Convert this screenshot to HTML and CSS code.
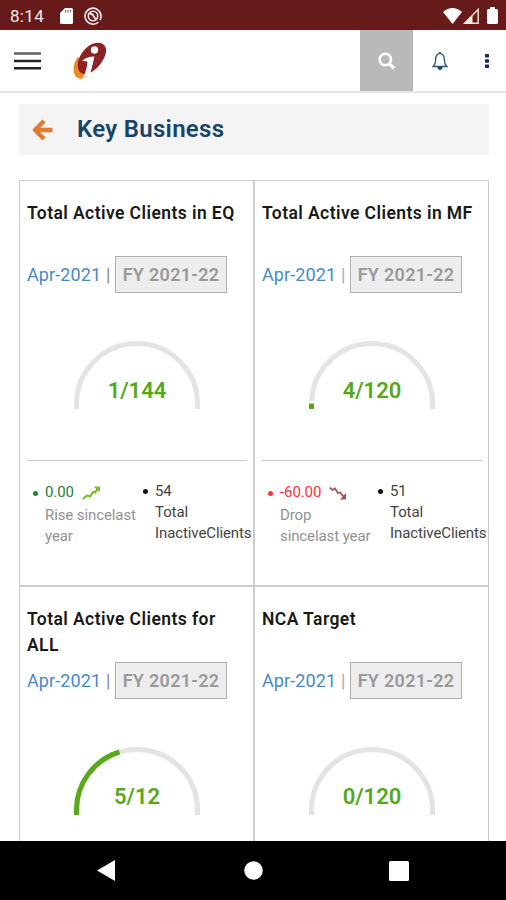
FILE: index.html
```html
<!DOCTYPE html>
<html lang="en">
<head>
    <meta charset="UTF-8">
    <meta name="viewport" content="width=device-width, initial-scale=1.0">
    <title>Key Business</title>
    <link rel="stylesheet" href="styles.css">
</head>
<body>
    <div class="status-bar">
        <span class="time">8:14</span>
        <svg class="sd-icon" width="13" height="16" viewBox="0 0 13 16"><path d="M5 0h6.500q1.500 0 1.500 1.500v13q0 1.500-1.500 1.500h-10Q0 16 0 14.500V5z" fill="#fff"/><path d="M5.500 2v2.500M8 2v2.500M10.500 2v2.500" stroke="#9a6565" stroke-width="1.200"/></svg>
        <svg class="sync-icon" width="18" height="18" viewBox="0 0 18 18" fill="none" stroke="#f5eaea"><path d="M14.500 15A8 8 0 1 1 17 9.500q0 2-1 3.500" stroke-width="1.600"/><circle cx="9" cy="9" r="4.700" stroke-width="1.600"/><path d="M5.500 6.500q3 0 4 2.500t3 3" stroke-width="1.900"/></svg>
        <div class="signals">
            <svg width="19" height="16" viewBox="0 0 19 16"><path d="M0 4Q9.500-4 19 4L9.500 16z" fill="#fff"/></svg>
            <svg width="16" height="16" viewBox="0 0 16 16"><path d="M1.500 15.200H15.200V1.500z" fill="none" stroke="#f5dfcf" stroke-width="1.500"/><path d="M1 16 9.500 7v9z" fill="#f8eee6"/></svg>
            <svg class="battery" width="11" height="17" viewBox="0 0 11 17"><path d="M3 0h5v2h1.500q1.500 0 1.500 1.500v12q0 1.500-1.500 1.500h-8Q0 17 0 15.500v-12Q0 2 1.500 2H3z" fill="#fff"/></svg>
        </div>
    </div>

    <header class="header">
        <svg class="menu" width="27" height="18" viewBox="0 0 27 18"><path d="M0 1.500h27" stroke="#666" stroke-width="2.600"/><path d="M0 9h27M0 16.300h27" stroke="#222" stroke-width="2.400"/></svg>
        <svg class="logo" width="34" height="38" viewBox="0 0 34 38">
            <path d="M5 15C-1 22-1 35 6 36.500c5 1 9-3 12-7z" fill="#ee8a1d"/>
            <path d="M9 11C14 3 23-1 29 1.500c7 3 4 14-2 21C21 30 13 34 8 31 3 27 4 18 9 11z" fill="#8d2224"/>
            <circle cx="21.500" cy="8" r="3.700" fill="#fff"/>
            <path d="M9 19Q13 14.500 21.500 14.500L18.500 27q-1 4-2.500 6l-6.500 3q4-6 5-16-2.500-1.500-5.500-1z" fill="#fff"/>
        </svg>
        <div class="actions">
            <div class="search"><svg width="18" height="18" viewBox="0 0 18 18" fill="none" stroke="#fff"><circle cx="7.300" cy="7.500" r="5.700" stroke-width="2.500"/><path d="M11.500 12l4.700 4.500" stroke-width="3.200"/></svg></div>
            <svg class="bell" width="16" height="18" viewBox="0 0 16 18"><path d="M8 1.700C4.500 1.700 3.700 4.500 3.700 7.500c0 4-1 5.500-2.500 7h13.600c-1.500-1.500-2.500-3-2.500-7 0-3-.8-5.800-4.300-5.800z" fill="none" stroke="#275777" stroke-width="1.300"/><path d="M8 0v2" stroke="#275777" stroke-width="1.800"/><path d="M5.300 15h5.400q-.5 3-2.700 3t-2.700-3z" fill="#18496b"/></svg>
            <svg class="dots" width="4" height="14" viewBox="0 0 4 14" fill="#15295c"><rect width="4" height="3.500" rx=".7"/><rect y="5.200" width="4" height="3.500" rx=".7"/><rect y="10.400" width="4" height="3.500" rx=".7"/></svg>
        </div>
    </header>

    <main class="content">
        <div class="page-title">
            <svg width="21" height="22" viewBox="0 0 21 22" fill="none" stroke="#e07b35" stroke-width="4.400" stroke-linejoin="round"><path d="M12 2 3 11l9 9M3 11h17.500"/></svg>
            <h1>Key Business</h1>
        </div>

        <div class="cards">
            <section class="card">
                <h2>Total Active Clients in EQ</h2>
                <div class="period"><a>Apr-2021</a><span class="sep">|</span><button>FY 2021-22</button></div>
                <div class="gauge">
                    <svg width="126" height="68" viewBox="0 0 126 68"><path class="track" d="M2.500 68V63a60.500 60.500 0 0 1 121 0v5"/></svg>
                    <span>1/144</span>
                </div>
                <div class="stats">
                    <ul class="change">
                        <li class="up">0.00 <svg width="18" height="14" viewBox="0 0 18 14"><path d="M.8 13 5 9.500l3 1L11 6l2 .5 3-4" fill="none" stroke="#79bd28" stroke-width="2.200"/><path d="M11.500.5H18V6z" fill="#79bd28"/></svg></li>
                        <li class="note">Rise sincelast year</li>
                    </ul>
                    <ul class="inactive">
                        <li>54<br>Total<br>InactiveClients</li>
                    </ul>
                </div>
            </section>

            <section class="card">
                <h2>Total Active Clients in MF</h2>
                <div class="period"><a>Apr-2021</a><span class="sep light">|</span><button>FY 2021-22</button></div>
                <div class="gauge">
                    <svg width="126" height="68" viewBox="0 0 126 68"><path class="track" d="M2.600 60A60.500 60.500 0 0 1 63 2.500A60.500 60.500 0 0 1 123.500 63v5"/><path class="value" d="M2.500 68v-5.500"/></svg>
                    <span>4/120</span>
                </div>
                <div class="stats">
                    <ul class="change">
                        <li class="down">-60.00 <svg width="18" height="14" viewBox="0 0 18 14"><path d="M.8 1.500 3.500 4 6 2.500 9 7l2-.5 4 4.500" fill="none" stroke="#a65353" stroke-width="1.800"/><path d="M17 7v6.500h-6z" fill="#a65353"/></svg></li>
                        <li class="note">Drop sincelast year</li>
                    </ul>
                    <ul class="inactive">
                        <li>51<br>Total<br>InactiveClients</li>
                    </ul>
                </div>
            </section>

            <section class="card">
                <h2>Total Active Clients for ALL</h2>
                <div class="period"><a>Apr-2021</a><span class="sep">|</span><button>FY 2021-22</button></div>
                <div class="gauge">
                    <svg width="126" height="68" viewBox="0 0 126 68"><path class="track" d="M2.500 68V63a60.500 60.500 0 0 1 121 0v5"/><path class="value" d="M2.500 68V63A60.500 60.500 0 0 1 45.500 5"/></svg>
                    <span>5/12</span>
                </div>
            </section>

            <section class="card">
                <h2>NCA Target</h2>
                <div class="period"><a>Apr-2021</a><span class="sep light">|</span><button>FY 2021-22</button></div>
                <div class="gauge">
                    <svg width="126" height="68" viewBox="0 0 126 68"><path class="track" d="M2.500 68V63a60.500 60.500 0 0 1 121 0v5"/></svg>
                    <span>0/120</span>
                </div>
            </section>
        </div>
    </main>

    <nav class="nav-bar">
        <svg width="18" height="21" viewBox="0 0 18 21"><path d="M18 0v21L0 10.500z" fill="#fff"/></svg>
        <svg class="home" width="19" height="19" viewBox="0 0 19 19"><circle cx="9.500" cy="9.500" r="9.300" fill="#fff"/></svg>
        <svg width="20" height="20" viewBox="0 0 20 20"><rect width="20" height="20" rx="1.500" fill="#fff"/></svg>
    </nav>
</body>
</html>
```
FILE: styles.css
```css
* {
    box-sizing: border-box;
}
body {
    margin: 0;
    height: 900px;
    display: flex;
    flex-direction: column;
    overflow: hidden;
    font-family: Roboto, sans-serif;
    background: #fff;
}
svg {
    display: block;
    flex-shrink: 0;
}
.status-bar {
    height: 30px;
    flex-shrink: 0;
    display: flex;
    align-items: center;
    padding: 1px 8px 0 10px;
    background: #671a1a;
    color: #f5eaea;
}
.time {
    width: 50px;
    font-size: 17px;
    letter-spacing: 0.3px;
}
.sync-icon {
    margin-left: 11px;
}
.signals {
    display: flex;
    align-items: center;
    gap: 1px;
    margin-left: auto;
}
.battery {
    margin-left: 7px;
}
.header {
    height: 63px;
    flex-shrink: 0;
    display: flex;
    align-items: center;
    padding-left: 14px;
    border-bottom: 2px solid #e5e5e5;
}
.logo {
    margin-left: 32px;
}
.actions {
    display: flex;
    align-items: center;
    align-self: stretch;
    margin-left: auto;
}
.search {
    width: 53px;
    align-self: stretch;
    display: flex;
    align-items: center;
    justify-content: center;
    background: #b9b9b9;
}
.bell {
    margin-left: 19px;
}
.dots {
    margin: 0 17px 0 37px;
}
.content {
    flex: 1;
    min-height: 0;
    overflow: hidden;
    padding: 11px 17px 0 19px;
}
.page-title {
    height: 51px;
    display: flex;
    align-items: center;
    padding-left: 13px;
    gap: 24px;
    background: #f4f4f4;
}
h1 {
    margin: -2px 0 0;
    font-size: 24px;
    font-weight: 600;
    letter-spacing: 0.3px;
    color: #164569;
}
.cards {
    display: grid;
    grid-template-columns: 1fr 1fr;
    grid-auto-rows: 406px;
    margin-top: 25px;
}
.card {
    min-width: 0;
    border: 1px solid #ccc;
    padding: 19px 7px 0;
}
h2 {
    height: 56px;
    margin: 0;
    font-size: 17.5px;
    font-weight: 600;
    line-height: 26px;
    letter-spacing: 0.42px;
    color: #191919;
}
.period {
    display: flex;
    align-items: center;
    height: 36px;
    font-size: 18px;
    letter-spacing: 0.1px;
    white-space: nowrap;
}
.period a {
    width: 79px;
    color: #468bc9;
}
.sep {
    width: 9px;
    color: #888;
}
.sep.light {
    color: #aaa;
}
.period button {
    width: 112px;
    height: 37px;
    padding: 0;
    border: 1px solid #b0b0b0;
    background: #ededed;
    color: #999;
    font: 600 18px Roboto, sans-serif;
    letter-spacing: 0.3px;
}
.gauge {
    display: grid;
    justify-content: center;
    height: 120px;
    margin-top: 49px;
}
.gauge > * {
    grid-area: 1 / 1;
}
.gauge span {
    margin: 35px 0 0 1px;
    text-align: center;
    font-size: 22px;
    font-weight: 600;
    line-height: 30px;
    color: #55a81c;
}
.track {
    fill: none;
    stroke: #e5e3e3;
    stroke-width: 5;
}
.value {
    fill: none;
    stroke: #57ab1a;
    stroke-width: 5;
}
.stats {
    display: flex;
    margin-top: -1px;
    width: 220px;
    border-top: 1px solid #c8c8c8;
    padding-top: 20px;
    font-size: 15px;
    line-height: 21.2px;
    letter-spacing: -0.1px;
}
.stats ul {
    margin: 0;
    padding: 0;
    list-style: none;
}
.stats .change {
    width: 110px;
    flex-shrink: 0;
    padding-left: 18px;
}
.stats .inactive {
    flex-shrink: 0;
    padding-left: 18px;
    color: #444;
}
.up,
.down {
    display: flex;
    align-items: center;
    gap: 8px;
    height: 24px;
    color: #238334;
}
.down {
    color: #f33;
}
.up::before,
.down::before,
.inactive li::before {
    content: "";
    flex-shrink: 0;
    width: 5px;
    height: 5px;
    margin-left: -12px;
    margin-right: -1px;
    border-radius: 50%;
    background: currentColor;
}
.inactive li::before {
    float: left;
    margin: 8px 0 0 -12px;
    background: #111;
}
.note {
    color: #929292;
}
.nav-bar {
    height: 59px;
    flex-shrink: 0;
    display: flex;
    justify-content: space-between;
    align-items: center;
    padding: 0 97px;
    background: #000;
}
.home {
    margin-left: 2px;
}
```
